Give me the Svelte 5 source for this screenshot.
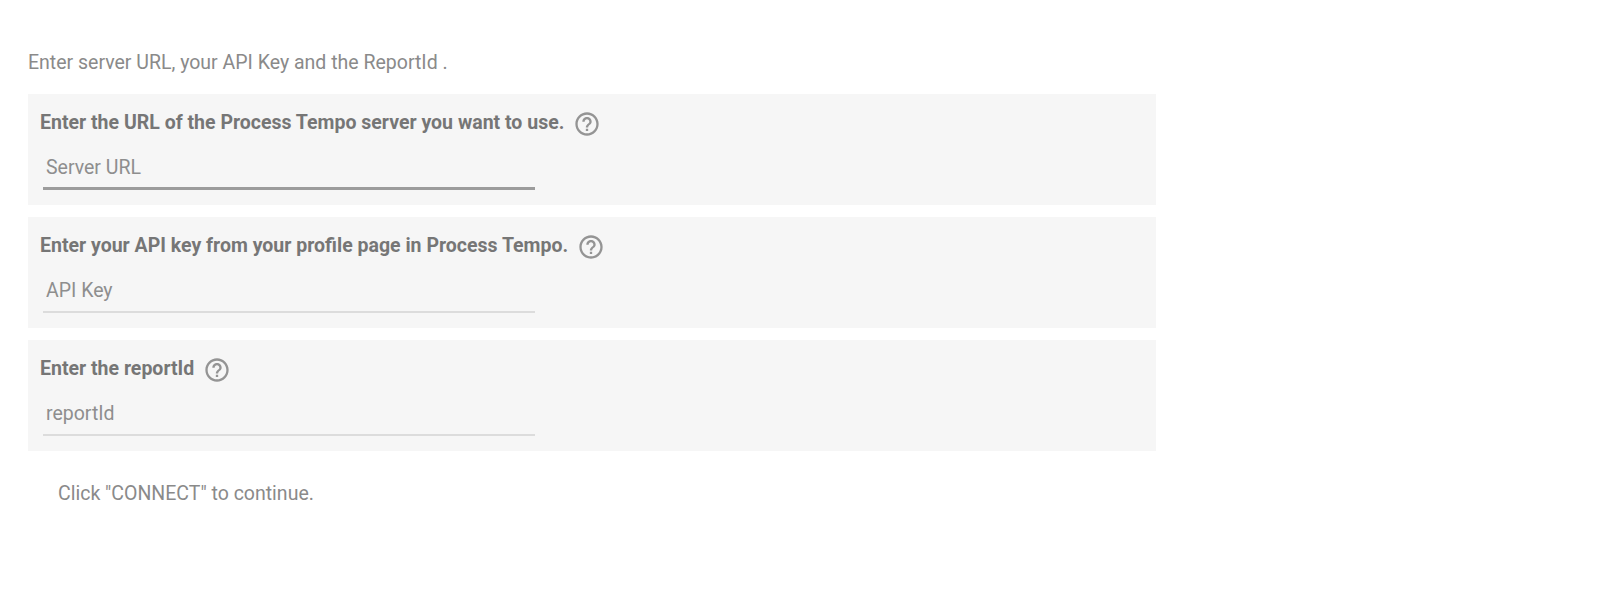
<script>
  const rows = [
    { label: 'Enter the URL of the Process Tempo server you want to use.', placeholder: 'Server URL', focused: true },
    { label: 'Enter your API key from your profile page in Process Tempo.', placeholder: 'API Key', focused: false },
    { label: 'Enter the reportId', placeholder: 'reportId', focused: false }
  ];
</script>

<main class="page">
  <p class="intro">Enter server URL, your API Key and the ReportId .</p>
  {#each rows as row}
    <section class="card">
      <div class="label-row">
        <span class="label">{row.label}</span>
        <svg class="help" viewBox="0 0 24 24" aria-hidden="true">
          <path d="M11 18h2v-2h-2v2zm1-16C6.48 2 2 6.48 2 12s4.48 10 10 10 10-4.48 10-10S17.52 2 12 2zm0 18c-4.41 0-8-3.59-8-8s3.59-8 8-8 8 3.59 8 8-3.59 8-8 8zm0-14c-2.21 0-4 1.79-4 4h2c0-1.1.9-2 2-2s2 .9 2 2c0 2-3 1.75-3 5h2c0-2.25 3-2.5 3-5 0-2.21-1.79-4-4-4z"/>
        </svg>
      </div>
      <div class="field" class:focused={row.focused}>
        <input type="text" placeholder={row.placeholder} />
      </div>
    </section>
  {/each}
  <p class="outro">Click "CONNECT" to continue.</p>
</main>

<style>
  :global(body) {
    margin: 0;
    background: #fff;
  }
  .page {
    width: 1128px;
    padding: 51px 0 0 28px;
    font-family: Roboto, sans-serif;
    color: #8a8a8a;
  }
  .intro {
    margin: 0 0 19px;
    font-size: 19.5px;
    line-height: 24px;
  }
  .card {
    height: 111px;
    box-sizing: border-box;
    margin-bottom: 12px;
    padding: 14px 12px 0;
    background: #f6f6f6;
  }
  .label-row {
    display: flex;
    align-items: center;
    height: 30px;
  }
  .label {
    font-size: 19.5px;
    font-weight: 700;
    color: #767676;
    line-height: 24px;
  }
  .help {
    width: 28px;
    height: 28px;
    margin: 2px 0 0 9px;
    fill: #949494;
  }
  .field {
    width: 492px;
    height: 40px;
    margin: 12px 0 0 3px;
    box-sizing: border-box;
    border-bottom: 2px solid #dcdcdc;
  }
  .field.focused {
    border-bottom: 3px solid #9c9c9c;
  }
  input {
    display: block;
    width: 100%;
    height: 34px;
    box-sizing: border-box;
    padding: 0 3px;
    border: 0;
    outline: 0;
    background: transparent;
    font: 19.5px/24px Roboto, sans-serif;
    color: #8a8a8a;
  }
  input::placeholder {
    color: #8e8e8e;
    opacity: 1;
  }
  .outro {
    margin: 31px 0 0 30px;
    font-size: 19.5px;
    line-height: 24px;
  }
</style>
